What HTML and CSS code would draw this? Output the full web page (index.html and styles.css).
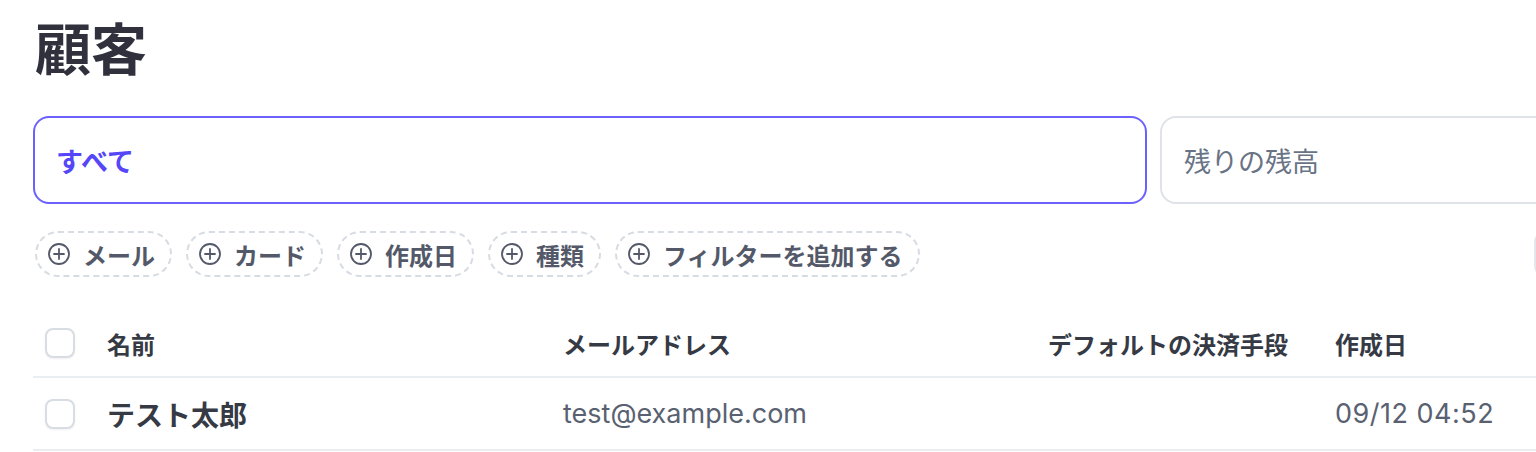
FILE: index.html
```html
<!DOCTYPE html>
<html lang="ja">
<head>
<meta charset="utf-8">
<title>顧客</title>
<link rel="stylesheet" href="styles.css">
</head>
<body>
<div class="page">
  <h1 class="title">顧客</h1>

  <div class="tabs">
    <div class="tab tab-active">すべて</div>
    <div class="tab">残りの残高</div>
  </div>

  <div class="toolbar">
    <div class="filters">
      <button class="pill"><svg class="plus" viewBox="0 0 22 22"><circle cx="11" cy="11" r="10"/><path d="M11 6v10M6 11h10"/></svg><span>メール</span></button>
      <button class="pill"><svg class="plus" viewBox="0 0 22 22"><circle cx="11" cy="11" r="10"/><path d="M11 6v10M6 11h10"/></svg><span>カード</span></button>
      <button class="pill"><svg class="plus" viewBox="0 0 22 22"><circle cx="11" cy="11" r="10"/><path d="M11 6v10M6 11h10"/></svg><span>作成日</span></button>
      <button class="pill"><svg class="plus" viewBox="0 0 22 22"><circle cx="11" cy="11" r="10"/><path d="M11 6v10M6 11h10"/></svg><span>種類</span></button>
      <button class="pill"><svg class="plus" viewBox="0 0 22 22"><circle cx="11" cy="11" r="10"/><path d="M11 6v10M6 11h10"/></svg><span>フィルターを追加する</span></button>
    </div>
    <div class="actions">
      <div class="action"></div>
    </div>
  </div>

  <div class="table">
    <div class="row head">
      <div class="cell check"><span class="box"></span></div>
      <div class="cell">名前</div>
      <div class="cell">メールアドレス</div>
      <div class="cell">デフォルトの決済手段</div>
      <div class="cell">作成日</div>
    </div>
    <div class="row body">
      <div class="cell check"><span class="box"></span></div>
      <div class="cell name">テスト太郎</div>
      <div class="cell muted">test@example.com</div>
      <div class="cell muted"></div>
      <div class="cell muted date">09/12 04:52</div>
    </div>
  </div>
</div>
</body>
</html>
```

FILE: styles.css
```css
html, body {
  margin: 0;
  padding: 0;
  background: #ffffff;
  overflow: hidden;
}

body {
  font-family: "Inter", "Noto Sans CJK JP", sans-serif;
  color: #353a44;
}

.page {
  padding-left: 33px;
  width: 1800px;
}

.title {
  margin: 0;
  padding-left: 2px;
  height: 100px;
  line-height: 100px;
  font-size: 56px;
  font-weight: 700;
  color: #30313d;
}

.tabs {
  margin-top: 16px;
  display: flex;
  gap: 13px;
}

.tab {
  box-sizing: border-box;
  height: 88px;
  width: 600px;
  border: 2px solid #dfe3e8;
  border-radius: 16px;
  padding-left: 22px;
  display: flex;
  align-items: center;
  font-size: 27px;
  color: #687385;
}

.tab-active {
  width: 1114px;
  padding-left: 21px;
  border-color: #6a61ff;
  color: #5546f8;
  font-weight: 600;
}

.toolbar {
  margin-top: 27px;
  display: grid;
  grid-template-columns: 1501px auto;
  align-items: center;
}

.filters {
  display: flex;
  gap: 14px;
  padding-left: 2px;
}

.pill {
  box-sizing: border-box;
  height: 46px;
  display: flex;
  align-items: center;
  gap: 13px;
  padding: 0 15px 0 11px;
  border: 2px dashed #d7dce2;
  border-radius: 23px;
  background: #fff;
  font-family: inherit;
  font-size: 24px;
  font-weight: 700;
  color: #545969;
}

.plus {
  flex-shrink: 0;
  width: 22px;
  height: 22px;
  fill: none;
  stroke: #545969;
  stroke-width: 1.8;
  stroke-linecap: round;
}

.actions {
  display: flex;
}

.action {
  box-sizing: border-box;
  width: 200px;
  height: 44px;
  border: 2px solid #e3e6ea;
  border-radius: 10px;
  background: #fff;
}

.table {
  margin-top: 33px;
}

.row {
  display: grid;
  grid-template-columns: 74px 456px 485px 287px 1fr;
  align-items: center;
  border-bottom: 2px solid #ebeef1;
}

.row.head {
  height: 66px;
  font-size: 24px;
  font-weight: 700;
  color: #353a44;
}

.row.body {
  height: 71px;
  font-size: 27px;
}

.cell {
  white-space: nowrap;
}

.check {
  padding-left: 12px;
  display: flex;
  align-items: center;
}

.box {
  box-sizing: border-box;
  width: 30px;
  height: 30px;
  border: 2px solid #d8dde3;
  border-radius: 8px;
  background: #fff;
  box-shadow: 0 1px 2px rgba(64, 68, 82, 0.08);
}

.name {
  font-weight: 700;
  font-size: 28px;
  color: #353a44;
}

.muted {
  color: #596171;
}

.date {
  letter-spacing: 0.5px;
}
```
